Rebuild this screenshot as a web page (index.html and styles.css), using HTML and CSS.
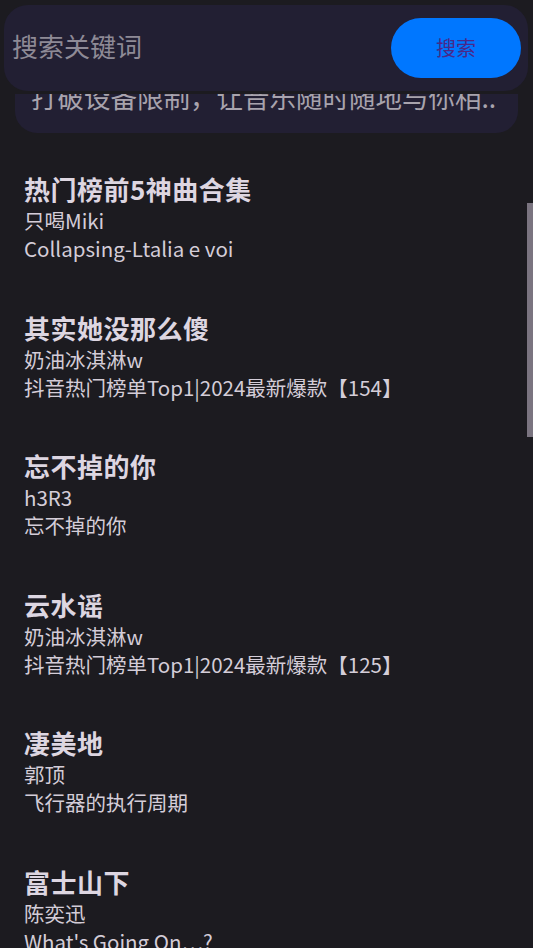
FILE: index.html
```html
<!DOCTYPE html>
<html>
<head>
<meta charset="utf-8">
<link rel="stylesheet" href="styles.css">
</head>
<body>
<div class="app">
  <div class="search">
    <div class="placeholder">搜索关键词</div>
    <div class="btn">搜索</div>
  </div>
  <div class="scroll">
    <div class="content">
      <div class="notice">打破设备限制，让音乐随时随地与你相..</div>
      <div class="list">
        <div class="item"><div class="title">热门榜前5神曲合集</div><div class="sub">只喝Miki</div><div class="sub">Collapsing-Ltalia e voi</div></div>
        <div class="item"><div class="title">其实她没那么傻</div><div class="sub">奶油冰淇淋w</div><div class="sub">抖音热门榜单Top1|2024最新爆款【154】</div></div>
        <div class="item"><div class="title">忘不掉的你</div><div class="sub">h3R3</div><div class="sub">忘不掉的你</div></div>
        <div class="item"><div class="title">云水谣</div><div class="sub">奶油冰淇淋w</div><div class="sub">抖音热门榜单Top1|2024最新爆款【125】</div></div>
        <div class="item"><div class="title">凄美地</div><div class="sub">郭顶</div><div class="sub">飞行器的执行周期</div></div>
        <div class="item"><div class="title">富士山下</div><div class="sub">陈奕迅</div><div class="sub">What's Going On…?</div></div>
      </div>
    </div>
    <div class="scrollbar"></div>
  </div>
</div>
</body>
</html>
```
FILE: styles.css
```css
html, body {
  margin: 0;
  padding: 0;
  background: #1c1b20;
}
body {
  font-family: "Noto Sans CJK SC", "Noto Sans", sans-serif;
  color: #ddd6e1;
}
.app {
  width: 533px;
  height: 948px;
  overflow: hidden;
  padding-top: 5px;
  box-sizing: border-box;
}
.search {
  margin: 0 5px 0 4px;
  height: 86px;
  box-sizing: border-box;
  background: #221f33;
  border-radius: 24px;
  display: flex;
  align-items: center;
  justify-content: space-between;
  padding: 0 7px 0 8px;
}
.placeholder {
  font-size: 26px;
  color: #8e8a96;
  margin-top: -5px;
}
.btn {
  width: 130px;
  height: 60px;
  border-radius: 30px;
  background: #0077ff;
  color: #4a2888;
  font-size: 20px;
  display: flex;
  align-items: center;
  justify-content: center;
  margin-top: -1px;
}
.scroll {
  position: relative;
  margin-top: 3px;
  height: 854px;
  overflow: hidden;
}
.content {
  padding: 0 15px 0 15px;
  margin-top: -61px;
}
.notice {
  background: #221f33;
  border-radius: 0 0 22px 22px;
  height: 100px;
  box-sizing: border-box;
  padding: 46px 0 0 16px;
  font-size: 26.5px;
  line-height: 36px;
  color: #a8a3ad;
  white-space: nowrap;
}
.list {
  padding: 39px 0 0 9px;
  display: flex;
  flex-direction: column;
  gap: 48.6px;
}
.title {
  font-size: 26px;
  letter-spacing: 0.5px;
  font-weight: 700;
  line-height: 34px;
  color: #ddd6e1;
}
.sub {
  font-size: 20.5px;
  line-height: 28px;
  color: #d4cdd8;
}
.scrollbar {
  position: absolute;
  right: 0;
  top: 109px;
  width: 6px;
  height: 234px;
  background: #7a7480;
}
```
